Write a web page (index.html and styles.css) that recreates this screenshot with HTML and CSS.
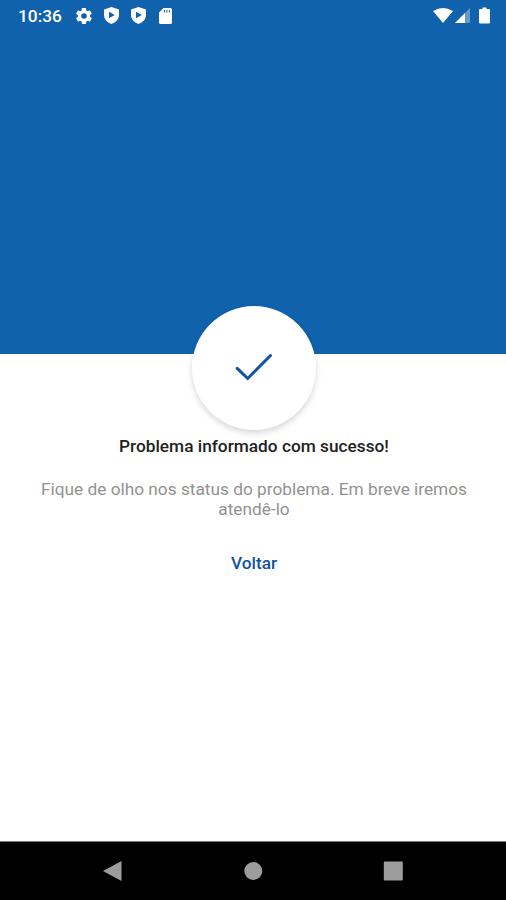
FILE: index.html
```html
<!DOCTYPE html>
<html lang="pt-BR">
<head>
  <meta charset="UTF-8">
  <meta name="viewport" content="width=device-width, initial-scale=1.0">
  <title>Problema informado</title>
  <link rel="stylesheet" href="styles.css">
</head>
<body>
  <!-- Header with status bar -->
  <header class="header">
    <div class="status-bar">
      <span class="clock">10:36</span>
      <div class="notifications">
        <svg class="gear" viewBox="2 2 20 20"><path fill-rule="evenodd" d="M19.4 13a7.500 7.500 0 0 0 0-2l2.100-1.600c.2-.2.200-.4.100-.6l-2-3.500c-.1-.2-.4-.3-.6-.2l-2.500 1a7 7 0 0 0-1.700-1l-.4-2.600c0-.3-.2-.5-.5-.5h-4c-.2 0-.4.200-.5.400L9 5.100a8 8 0 0 0-1.700 1l-2.500-1c-.2-.1-.5 0-.6.200l-2 3.500c-.1.200 0 .5.100.6L4.500 11a7.500 7.500 0 0 0 0 2l-2.200 1.600c-.2.200-.2.400-.1.600l2 3.500c.1.200.4.300.6.200l2.500-1a7 7 0 0 0 1.700 1l.4 2.600c.1.300.3.500.6.500h4c.2 0 .4-.2.500-.5l.4-2.600a8 8 0 0 0 1.700-1l2.500 1c.2.100.5 0 .6-.2l2-3.500c.1-.2 0-.5-.1-.6zM12 15.500a3.500 3.500 0 1 1 0-7 3.500 3.500 0 0 1 0 7z"/></svg>
        <svg class="shield" viewBox="0 0 15 17"><path fill-rule="evenodd" d="M7.500 0 15 2.600V8c0 4-3 7.400-7.500 9C3 15.400 0 12 0 8V2.600zM5 4.700v6.600l5.800-3.300z"/></svg>
        <svg class="shield" viewBox="0 0 15 17"><path fill-rule="evenodd" d="M7.500 0 15 2.600V8c0 4-3 7.400-7.500 9C3 15.400 0 12 0 8V2.600zM5 4.700v6.600l5.800-3.300z"/></svg>
        <svg class="sd-card" viewBox="0 0 13 16"><path fill-rule="evenodd" d="M4.500 0H11.500Q13 0 13 1.500V14.500Q13 16 11.500 16H1.500Q0 16 0 14.500V4.500zM5 2v2.500h1V2zM7.400 2v2.500h1V2zM9.800 2v2.500h1V2z"/></svg>
      </div>
      <div class="system-icons">
        <svg class="wifi" viewBox="0 0 20 15"><path d="M0 3Q10-3 20 3L10 15z"/></svg>
        <svg class="signal" viewBox="0 0 15 15"><path opacity=".35" d="M15 0v15H0z"/><path d="M10 5v10H0z"/></svg>
        <svg class="battery" viewBox="0 0 11 16"><path d="M3.500 0h4v1.600H10q1 0 1 1V15q0 1-1 1H1q-1 0-1-1V2.600q0-1 1-1h2.500z"/></svg>
      </div>
    </div>
  </header>

  <!-- Success message -->
  <main class="content">
    <div class="check-circle">
      <svg viewBox="0 0 38 28"><path d="M2.200 15.300 12.700 25.500 35.500 2.500"/></svg>
    </div>
    <h1>Problema informado com sucesso!</h1>
    <p>Fique de olho nos status do problema. Em breve iremos atendê-lo</p>
    <button>Voltar</button>
  </main>

  <!-- Android navigation -->
  <nav class="nav-bar">
    <svg viewBox="0 0 20 22"><path d="M18.500 1v20L0 11z"/></svg>
    <svg viewBox="0 0 20 22"><circle cx="10.300" cy="11" r="9"/></svg>
    <svg viewBox="0 0 20 22"><rect x=".8" y="1.500" width="19" height="19" rx="1"/></svg>
  </nav>
</body>
</html>
```
FILE: styles.css
```css
/* General Styles */
* {
  box-sizing: border-box;
}

body {
  margin: 0;
  height: 900px;
  display: flex;
  flex-direction: column;
  background-color: #fff;
  font-family: Roboto, sans-serif;
  overflow: hidden;
}

svg {
  display: block;
  fill: currentColor;
}

/* Header */
.header {
  height: 354px;
  flex-shrink: 0;
  background-color: #1062ad;
  color: #fff;
}

.status-bar {
  display: flex;
  align-items: center;
  height: 31px;
  padding: 0 16px 0 18px;
}

.clock {
  width: 58px;
  font-size: 17.3px;
  font-weight: 500;
}

.notifications {
  display: flex;
  align-items: center;
  gap: 12px;
}

.gear {
  width: 16px;
  height: 16px;
}

.shield {
  width: 15px;
  height: 17px;
}

.sd-card {
  width: 13px;
  height: 16px;
  margin-left: 1px;
}

.system-icons {
  display: flex;
  align-items: center;
  margin-left: auto;
}

.wifi {
  width: 20px;
  height: 15px;
}

.signal {
  width: 15px;
  height: 15px;
  margin: 0 9px 0 2px;
}

.battery {
  width: 11px;
  height: 17px;
}

/* Content */
.content {
  flex: 1;
  display: flex;
  flex-direction: column;
  align-items: center;
  padding: 0 28px 0 30px;
  text-align: center;
}

.check-circle {
  display: flex;
  justify-content: center;
  align-items: center;
  width: 124px;
  height: 124px;
  margin-top: -48px;
  border-radius: 50%;
  background-color: #fff;
  box-shadow: 0 3px 6px rgba(0, 0, 0, 0.16);
  z-index: 1;
}

.check-circle svg {
  width: 38px;
  height: 28px;
  margin-top: -2px;
  fill: none;
  stroke: #1153a0;
  stroke-width: 3;
  stroke-linecap: round;
}

h1 {
  margin: 6px 0 0;
  font-size: 17.28px;
  font-weight: 500;
  line-height: 20px;
  color: #222;
}

p {
  margin: 23px 0 0;
  font-size: 17.28px;
  line-height: 20px;
  color: #929292;
}

button {
  margin-top: 34px;
  padding: 0;
  border: none;
  background: none;
  font-family: inherit;
  font-size: 17.28px;
  font-weight: 500;
  line-height: 20px;
  color: #1153a0;
}

/* Navigation Bar */
.nav-bar {
  display: flex;
  justify-content: space-between;
  height: 59px;
  padding: 18px 103px 0;
  border-top: 1px solid #777;
  background-color: #000;
  color: #9d9d9d;
}

.nav-bar svg {
  width: 20px;
  height: 22px;
}
```
